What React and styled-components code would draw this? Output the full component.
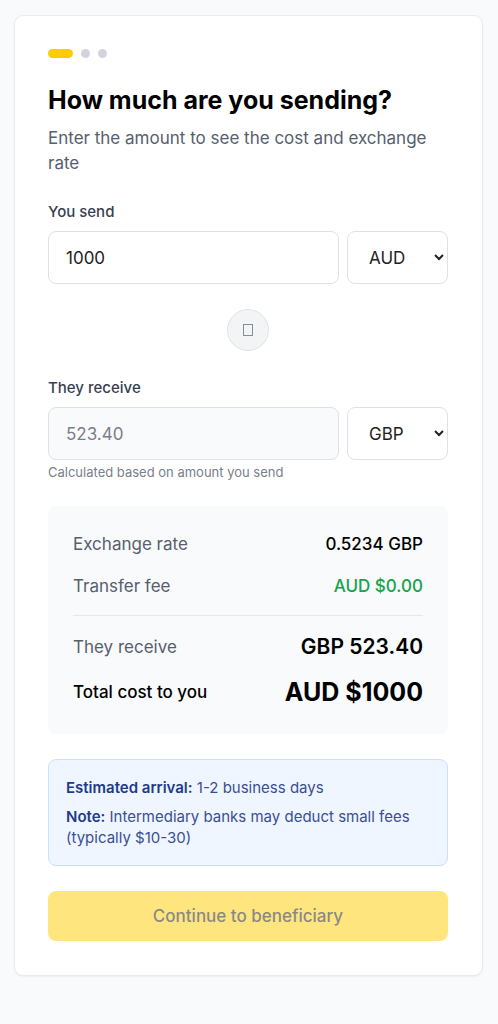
import React, { useState } from 'react'
import styled, { createGlobalStyle } from 'styled-components'

const GlobalStyle = createGlobalStyle`
  *, *::before, *::after {
    box-sizing: border-box;
  }

  body {
    margin: 0;
    background: #f9fafc;
    font-family: Inter, 'Liberation Sans', sans-serif;
    font-size: 17px;
    line-height: 25px;
    color: #000000;
  }

  input, select, button {
    font: inherit;
  }
`

const Page = styled.main`
  padding: 15px 15px 48px 14px;
`

const Card = styled.form`
  max-width: 700px;
  margin: 0 auto;
  padding: 33px 34px 34px 33px;
  background: #ffffff;
  border: 1px solid #e9ebef;
  border-radius: 9px;
  box-shadow: 0 1px 2px rgba(0, 0, 0, 0.05);
`

const Steps = styled.div`
  display: flex;
  gap: 8px;
  margin-bottom: 26px;
`

const Step = styled.span`
  width: ${({ $active }) => ($active ? '25px' : '9px')};
  height: 9px;
  border-radius: 9px;
  background: ${({ $active }) => ($active ? '#ffcc00' : '#d1d4dc')};
`

const Title = styled.h1`
  margin: 0 0 9px;
  font-size: 25px;
  line-height: 33px;
  font-weight: 700;
`

const Subtitle = styled.p`
  margin: 0 0 25px;
  color: #56606d;
`

const Label = styled.label`
  display: block;
  margin-bottom: 9px;
  font-size: 15px;
  line-height: 21px;
  font-weight: 500;
  color: #374151;
`

const FieldRow = styled.div`
  display: flex;
  gap: 8px;
`

const AmountInput = styled.input`
  flex: 1;
  min-width: 0;
  height: 53px;
  padding: 0 17px;
  border: 1px solid #dfe1e7;
  border-radius: 8px;
  background: #ffffff;
  color: #222222;

  &:read-only {
    background: #f9fafc;
    color: #787f8a;
  }
`

const CurrencySelect = styled.select`
  width: 101px;
  height: 53px;
  padding: 0 17px;
  border: 1px solid #dfe1e7;
  border-radius: 8px;
  background: #ffffff;
  color: #222222;
`

const Hint = styled.p`
  margin: 4px 0 0;
  font-size: 13px;
  line-height: 17px;
  color: #787f8a;
`

const SwapRow = styled.div`
  display: flex;
  justify-content: center;
  margin: 25px 0 26px;
`

const SwapButton = styled.button`
  display: flex;
  align-items: center;
  justify-content: center;
  width: 42px;
  height: 42px;
  padding: 0;
  border: 1px solid #e0e3e8;
  border-radius: 50%;
  background: #f3f4f6;
  color: #858c98;
`

const Summary = styled.dl`
  margin: 25px 0;
  padding: 26px 25px 25px;
  border-radius: 8px;
  background: #f9fafc;
`

const SummaryRow = styled.div`
  display: flex;
  align-items: center;
  justify-content: space-between;

  & + & {
    margin-top: 17px;
  }
`

const Totals = styled.div`
  display: flex;
  flex-direction: column;
  gap: 13px;
  margin-top: 16px;
  padding-top: 16px;
  border-top: 1px solid #e5e7eb;

  ${SummaryRow} + ${SummaryRow} {
    margin-top: 0;
  }
`

const Term = styled.dt`
  color: ${({ $strong }) => ($strong ? '#000000' : '#56606d')};
  font-weight: ${({ $strong }) => ($strong ? 500 : 400)};
`

const Value = styled.dd`
  margin: 0;
  color: ${({ $free }) => ($free ? '#16a34a' : '#000000')};
  font-weight: 500;
`

const Received = styled(Value)`
  font-size: 21px;
  line-height: 30px;
  font-weight: 600;
`

const Total = styled(Value)`
  font-size: 25px;
  line-height: 34px;
  font-weight: 700;
`

const Notice = styled.div`
  margin-bottom: 25px;
  padding: 17px;
  border: 1px solid #cbe0fe;
  border-radius: 8px;
  background: #eff6ff;
  font-size: 15px;
  line-height: 21px;
  color: #3a4f93;

  p {
    margin: 0;
  }

  p + p {
    margin-top: 8px;
  }

  strong {
    color: #1e3a8a;
    font-weight: 600;
  }
`

const SubmitButton = styled.button`
  display: block;
  width: 100%;
  height: 50px;
  border: 0;
  border-radius: 8px;
  background: #ffcc00;
  color: #111111;
  font-weight: 500;
  opacity: 0.5;
`

const RATE = 0.5234
const CURRENCIES = ['AUD', 'GBP', 'USD', 'EUR']

const CurrencyPicker = ({ label, value, onChange }) => (
  <CurrencySelect aria-label={label} value={value} onChange={(e) => onChange(e.target.value)}>
    {CURRENCIES.map((code) => (
      <option key={code} value={code}>{code}</option>
    ))}
  </CurrencySelect>
)

const App = () => {
  const [amount, setAmount] = useState('1000')
  const [from, setFrom] = useState('AUD')
  const [to, setTo] = useState('GBP')

  const received = (Number(amount) * RATE || 0).toFixed(2)

  const swap = () => {
    setFrom(to)
    setTo(from)
  }

  return (
    <>
      <GlobalStyle />
      <Page>
        <Card onSubmit={(e) => e.preventDefault()}>
          <Steps>
            <Step $active />
            <Step />
            <Step />
          </Steps>

          <Title>How much are you sending?</Title>
          <Subtitle>Enter the amount to see the cost and exchange rate</Subtitle>

          <Label htmlFor="send">You send</Label>
          <FieldRow>
            <AmountInput
              id="send"
              inputMode="decimal"
              value={amount}
              onChange={(e) => setAmount(e.target.value)}
            />
            <CurrencyPicker label="Send currency" value={from} onChange={setFrom} />
          </FieldRow>

          <SwapRow>
            <SwapButton type="button" aria-label="Swap currencies" onClick={swap}>
              <svg width="10" height="12" viewBox="0 0 10 12" fill="none" stroke="currentColor">
                <rect x="0.5" y="0.5" width="9" height="11" />
              </svg>
            </SwapButton>
          </SwapRow>

          <Label htmlFor="receive">They receive</Label>
          <FieldRow>
            <AmountInput id="receive" value={received} readOnly />
            <CurrencyPicker label="Receive currency" value={to} onChange={setTo} />
          </FieldRow>
          <Hint>Calculated based on amount you send</Hint>

          <Summary>
            <SummaryRow>
              <Term>Exchange rate</Term>
              <Value>{RATE} {to}</Value>
            </SummaryRow>
            <SummaryRow>
              <Term>Transfer fee</Term>
              <Value $free>{from} $0.00</Value>
            </SummaryRow>
            <Totals>
              <SummaryRow>
                <Term>They receive</Term>
                <Received>{to} {received}</Received>
              </SummaryRow>
              <SummaryRow>
                <Term $strong>Total cost to you</Term>
                <Total>{from} ${amount}</Total>
              </SummaryRow>
            </Totals>
          </Summary>

          <Notice>
            <p><strong>Estimated arrival:</strong> 1-2 business days</p>
            <p><strong>Note:</strong> Intermediary banks may deduct small fees (typically $10-30)</p>
          </Notice>

          <SubmitButton type="submit" disabled>Continue to beneficiary</SubmitButton>
        </Card>
      </Page>
    </>
  )
}

export default App
